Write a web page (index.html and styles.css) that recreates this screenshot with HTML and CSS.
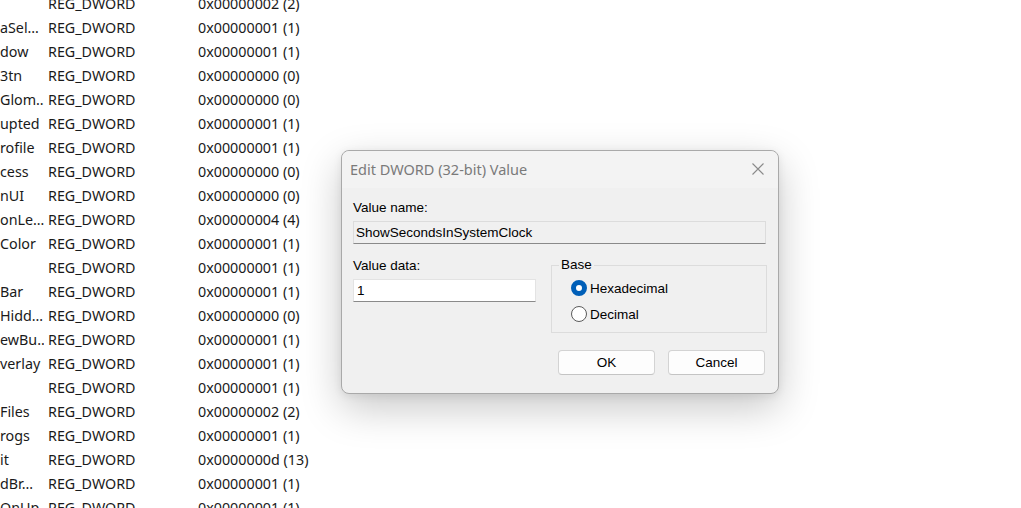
FILE: index.html
```html
<!DOCTYPE html>
<html lang="en">
<head>
  <meta charset="UTF-8">
  <title>Registry Editor</title>
  <link rel="stylesheet" href="styles.css">
</head>
<body>
  <div class="values">
    <div class="row"><span class="name"></span><span>REG_DWORD</span><span>0x00000002 (2)</span></div>
    <div class="row"><span class="name">aSel…</span><span>REG_DWORD</span><span>0x00000001 (1)</span></div>
    <div class="row"><span class="name">dow</span><span>REG_DWORD</span><span>0x00000001 (1)</span></div>
    <div class="row"><span class="name">3tn</span><span>REG_DWORD</span><span>0x00000000 (0)</span></div>
    <div class="row"><span class="name">Glom…</span><span>REG_DWORD</span><span>0x00000000 (0)</span></div>
    <div class="row"><span class="name">upted</span><span>REG_DWORD</span><span>0x00000001 (1)</span></div>
    <div class="row"><span class="name">rofile</span><span>REG_DWORD</span><span>0x00000001 (1)</span></div>
    <div class="row"><span class="name">cess</span><span>REG_DWORD</span><span>0x00000000 (0)</span></div>
    <div class="row"><span class="name">nUI</span><span>REG_DWORD</span><span>0x00000000 (0)</span></div>
    <div class="row"><span class="name">onLe…</span><span>REG_DWORD</span><span>0x00000004 (4)</span></div>
    <div class="row"><span class="name">Color</span><span>REG_DWORD</span><span>0x00000001 (1)</span></div>
    <div class="row"><span class="name"></span><span>REG_DWORD</span><span>0x00000001 (1)</span></div>
    <div class="row"><span class="name">Bar</span><span>REG_DWORD</span><span>0x00000001 (1)</span></div>
    <div class="row"><span class="name">Hidd…</span><span>REG_DWORD</span><span>0x00000000 (0)</span></div>
    <div class="row"><span class="name">ewBu…</span><span>REG_DWORD</span><span>0x00000001 (1)</span></div>
    <div class="row"><span class="name">verlay</span><span>REG_DWORD</span><span>0x00000001 (1)</span></div>
    <div class="row"><span class="name"></span><span>REG_DWORD</span><span>0x00000001 (1)</span></div>
    <div class="row"><span class="name">Files</span><span>REG_DWORD</span><span>0x00000002 (2)</span></div>
    <div class="row"><span class="name">rogs</span><span>REG_DWORD</span><span>0x00000001 (1)</span></div>
    <div class="row"><span class="name">it</span><span>REG_DWORD</span><span>0x0000000d (13)</span></div>
    <div class="row"><span class="name">dBr…</span><span>REG_DWORD</span><span>0x00000001 (1)</span></div>
    <div class="row"><span class="name">OnUp…</span><span>REG_DWORD</span><span>0x00000001 (1)</span></div>
  </div>

  <div class="dialog">
    <div class="titlebar">
      <span class="title">Edit DWORD (32-bit) Value</span>
      <svg class="close" width="12" height="12" viewBox="0 0 12 12">
        <path d="M0.5 0.5 L11.5 11.5 M11.5 0.5 L0.5 11.5" stroke="#8a8a8a" stroke-width="1.1" fill="none"/>
      </svg>
    </div>
    <div class="body">
      <label class="label">Value name:</label>
      <div class="field readonly">ShowSecondsInSystemClock</div>
      <div class="middle">
        <div class="data">
          <label class="label">Value data:</label>
          <div class="field">1</div>
        </div>
        <fieldset class="base">
          <legend>Base</legend>
          <div class="radio"><span class="dot on"></span>Hexadecimal</div>
          <div class="radio"><span class="dot"></span>Decimal</div>
        </fieldset>
      </div>
      <div class="buttons">
        <button class="btn">OK</button>
        <button class="btn">Cancel</button>
      </div>
    </div>
  </div>
</body>
</html>
```

FILE: styles.css
```css
html, body {
  margin: 0;
  height: 100%;
  overflow: hidden;
  background: #fff;
}
body {
  position: relative;
  font-family: "Segoe UI", "Noto Sans", sans-serif;
  color: #1a1a1a;
}

.values {
  margin-top: -9px;
  font-size: 14.3px;
}
.values .row {
  display: grid;
  grid-template-columns: 48px 150px auto;
  height: 24px;
  align-items: center;
  white-space: nowrap;
}
.values .name {
  width: 44px;
  overflow: hidden;
}

.dialog {
  position: absolute;
  left: 341px;
  top: 150px;
  width: 436px;
  height: 242px;
  background: #f0f0f0;
  border: 1px solid #a9a9a9;
  border-radius: 8px;
  box-shadow: 0 14px 40px rgba(0, 0, 0, 0.22), 0 2px 8px rgba(0, 0, 0, 0.08);
  font-family: "Liberation Sans", Arial, sans-serif;
  font-size: 13.5px;
  color: #000;
}
.titlebar {
  display: flex;
  align-items: center;
  justify-content: space-between;
  height: 37px;
  padding: 0 14px 0 8px;
  background: #f3f3f3;
  border-radius: 8px 8px 0 0;
}
.titlebar .title {
  font-family: "Segoe UI", "Noto Sans", sans-serif;
  font-size: 14.5px;
  color: #7a7a7a;
  margin-top: -2px;
}
.titlebar .close {
  margin-top: -2px;
}

.body {
  padding: 12px 12px 0 11px;
}
.label {
  display: block;
  height: 16px;
  line-height: 16px;
}
.field {
  box-sizing: border-box;
  height: 23px;
  margin-top: 5px;
  padding: 0 3px;
  line-height: 22px;
  background: #fff;
  border: 1px solid #e3e3e3;
  border-bottom: 1px solid #8a8a8a;
}
.field.readonly {
  background: #f0f0f0;
  border-color: #dcdcdc;
  border-bottom-color: #8a8a8a;
  padding-left: 2px;
}

.middle {
  display: grid;
  grid-template-columns: 183px 216px;
  column-gap: 15px;
  margin-top: 13px;
}
.middle .data {
  margin-top: 1px;
}
.base {
  box-sizing: border-box;
  height: 76px;
  margin: 0;
  padding: 0 0 0 19px;
  border: 1px solid #dcdcdc;
}
.base legend {
  padding: 0 2px;
  margin-left: -12px;
  line-height: 16px;
}
.radio {
  display: flex;
  align-items: center;
  height: 20px;
  margin-top: 5px;
}
.radio + .radio {
  margin-top: 6px;
}
.dot {
  box-sizing: border-box;
  width: 16px;
  height: 16px;
  margin-right: 3px;
  border: 1px solid #5b5b5b;
  border-radius: 50%;
  background: #fff;
}
.dot.on {
  border: 5px solid #005fb8;
  background: #fff;
}

.buttons {
  display: flex;
  justify-content: flex-end;
  gap: 13px;
  margin: 17px 1px 0 0;
}
.btn {
  width: 97px;
  height: 25px;
  padding: 0;
  font-family: "Liberation Sans", Arial, sans-serif;
  font-size: 13.5px;
  color: #000;
  background: #fdfdfd;
  border: 1px solid #d3d3d3;
  border-bottom-color: #c4c4c4;
  border-radius: 4px;
}
```
